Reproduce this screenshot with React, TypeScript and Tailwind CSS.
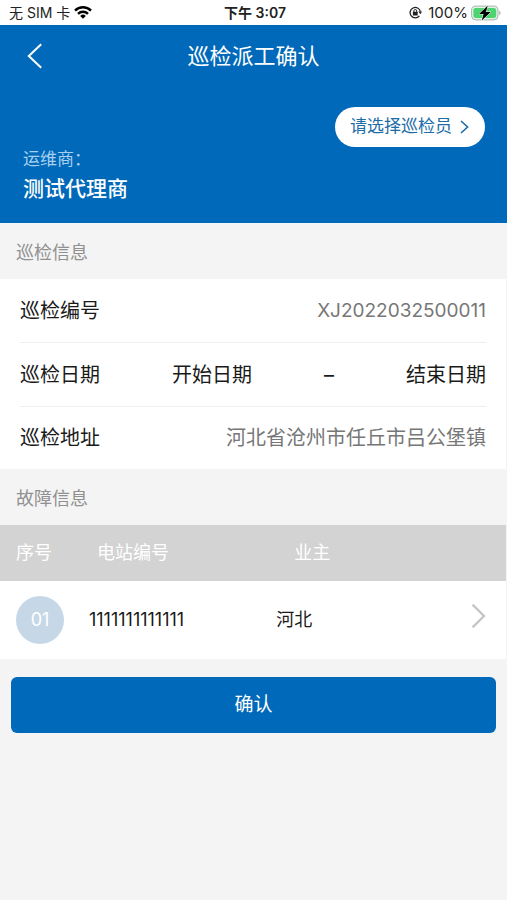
import React from 'react';

interface Fault {
  no: string;
  station: string;
  owner: string;
}

const faults: Fault[] = [{ no: '01', station: '1111111111111', owner: '河北' }];

const StatusBar: React.FC = () => (
  <div className="grid h-[25px] grid-cols-3 items-center bg-white pl-[9px] pr-[6px] text-[14px] leading-5 text-[#222]">
    <div className="flex items-center gap-1">
      <span>无 SIM 卡</span>
      <svg className="h-[13px] w-[18px]" viewBox="0 0 18 13" aria-hidden="true">
        <g fill="none" stroke="#000" strokeWidth="2.4">
          <path d="M1 4.6a11.4 11.4 0 0 1 16 0" />
          <path d="M4 7.8a7.2 7.2 0 0 1 10 0" />
        </g>
        <path d="M9 12.8 6.2 9.9a4 4 0 0 1 5.6 0Z" fill="#000" />
      </svg>
    </div>
    <div className="text-center font-semibold">下午 3:07</div>
    <div className="flex items-center justify-end">
      <svg className="mr-[6px] h-[13px] w-[13px]" viewBox="0 0 13 13" aria-hidden="true">
        <path d="M10.4 9.9A5.2 5.2 0 1 1 11.4 5.6" fill="none" stroke="#222" strokeWidth="1.3" />
        <path d="m9.3 5.6 3.7-.2-1.6 2.9Z" fill="#222" />
        <rect x="3.9" y="5.8" width="4.8" height="3.6" rx="0.5" fill="#222" />
        <path d="M4.9 6V4.9a1.4 1.4 0 0 1 2.8 0V6" fill="none" stroke="#222" strokeWidth="1" />
      </svg>
      <span className="mr-[3px] text-[15px]">100%</span>
      <svg className="h-[16px] w-[30px]" viewBox="0 0 30 16" aria-hidden="true">
        <rect x="0.6" y="1.1" width="26.4" height="13.8" rx="4" fill="#dff3e4" stroke="#a9b5ac" strokeWidth="1" />
        <rect x="2.4" y="2.9" width="22.8" height="10.2" rx="2.4" fill="#4cd471" />
        <path d="M28.2 5.8c1.8.6 1.8 3.8 0 4.4Z" fill="#a9b5ac" />
        <path
          d="M16.8.4 8 8.9h4.6l-1.9 6.7 9.1-8.5h-4.9Z"
          fill="#000"
          stroke="#fff"
          strokeWidth="1"
          paintOrder="stroke"
        />
      </svg>
    </div>
  </div>
);

const SectionTitle: React.FC<{ children: React.ReactNode }> = ({ children }) => (
  <h2 className="px-4 pt-4 pb-3 text-[18px] leading-7 text-[#909090]">{children}</h2>
);

const App: React.FC = () => {
  return (
    <div className="min-h-screen bg-[#f4f4f4] font-['Inter','Noto_Sans_CJK_SC',sans-serif] text-[#1a1a1a]">
      <StatusBar />

      {/* Header */}
      <header className="bg-[#0069b9] pb-5 text-white">
        <div className="grid grid-cols-[60px_1fr_60px] items-center pt-3">
          <button type="button" aria-label="返回" className="flex h-[38px] items-center pl-[26px]">
            <svg className="h-[26px] w-[17px]" viewBox="0 0 17 26" fill="none" aria-hidden="true">
              <path d="M15.2 1.3 2.8 13l12.4 11.7" stroke="currentColor" strokeWidth="2" />
            </svg>
          </button>
          <h1 className="text-center text-[22px] leading-9">巡检派工确认</h1>
        </div>
        <div className="mt-8 flex justify-end pr-[22px]">
          <button
            type="button"
            className="flex h-10 items-center gap-2 rounded-full bg-white pl-[15px] pr-4 text-[17px] text-[#1d6ca8]"
          >
            请选择巡检员
            <svg className="h-[14px] w-[9px]" viewBox="0 0 9 14" fill="none" aria-hidden="true">
              <path d="m1 1 6.6 6L1 13" stroke="currentColor" strokeWidth="1.6" />
            </svg>
          </button>
        </div>
        <div className="px-[23px]">
          <p className="text-[17px] leading-6 text-[#a9cfee]">运维商：</p>
          <p className="mt-1 text-[21px] font-medium leading-7">测试代理商</p>
        </div>
      </header>

      {/* Inspection info */}
      <SectionTitle>巡检信息</SectionTitle>
      <dl className="mr-px bg-white px-5 text-[20px] leading-8">
        <div className="flex h-16 items-center justify-between border-b border-[#efefef]">
          <dt>巡检编号</dt>
          <dd className="text-[19px] text-[#777]">XJ2022032500011</dd>
        </div>
        <div className="flex h-16 items-center border-b border-[#efefef]">
          <dt>巡检日期</dt>
          <dd className="flex flex-1 items-center justify-between pl-[72px]">
            <button type="button">开始日期</button>
            <span>–</span>
            <button type="button">结束日期</button>
          </dd>
        </div>
        <div className="flex h-[62px] items-center justify-between">
          <dt>巡检地址</dt>
          <dd className="text-[#777]">河北省沧州市任丘市吕公堡镇</dd>
        </div>
      </dl>

      {/* Fault info */}
      <SectionTitle>故障信息</SectionTitle>
      <div className="mr-px">
        <table className="w-full table-fixed text-left text-[18px] leading-7">
          <colgroup>
            <col className="w-[16%]" />
            <col className="w-[37%]" />
            <col className="w-[37%]" />
            <col className="w-[10%]" />
          </colgroup>
          <thead>
            <tr className="h-14 bg-[#d3d3d3] text-white">
              <th className="pl-4 font-normal">序号</th>
              <th className="pl-4 font-normal">电站编号</th>
              <th className="pl-[26px] font-normal">业主</th>
              <td></td>
            </tr>
          </thead>
          <tbody>
            {faults.map((fault) => (
              <tr key={fault.no} className="h-[78px] bg-white">
                <td className="pl-4">
                  <span className="flex h-12 w-12 items-center justify-center rounded-full bg-[#c6d8e8] text-white">
                    {fault.no}
                  </span>
                </td>
                <td className="pl-2">{fault.station}</td>
                <td className="pl-2">{fault.owner}</td>
                <td className="pb-2 pr-5">
                  <button type="button" aria-label="查看详情" className="ml-auto block">
                    <svg className="h-[26px] w-[15px]" viewBox="0 0 15 26" fill="none" aria-hidden="true">
                      <path d="M1.6 1.6 13 13 1.6 24.4" stroke="#c4c4c4" strokeWidth="2.2" />
                    </svg>
                  </button>
                </td>
              </tr>
            ))}
          </tbody>
        </table>
      </div>

      <div className="px-[11px] pt-[18px]">
        <button type="button" className="h-14 w-full rounded-md bg-[#0069b9] text-[19px] text-white">
          确认
        </button>
      </div>
    </div>
  );
};

export default App;
